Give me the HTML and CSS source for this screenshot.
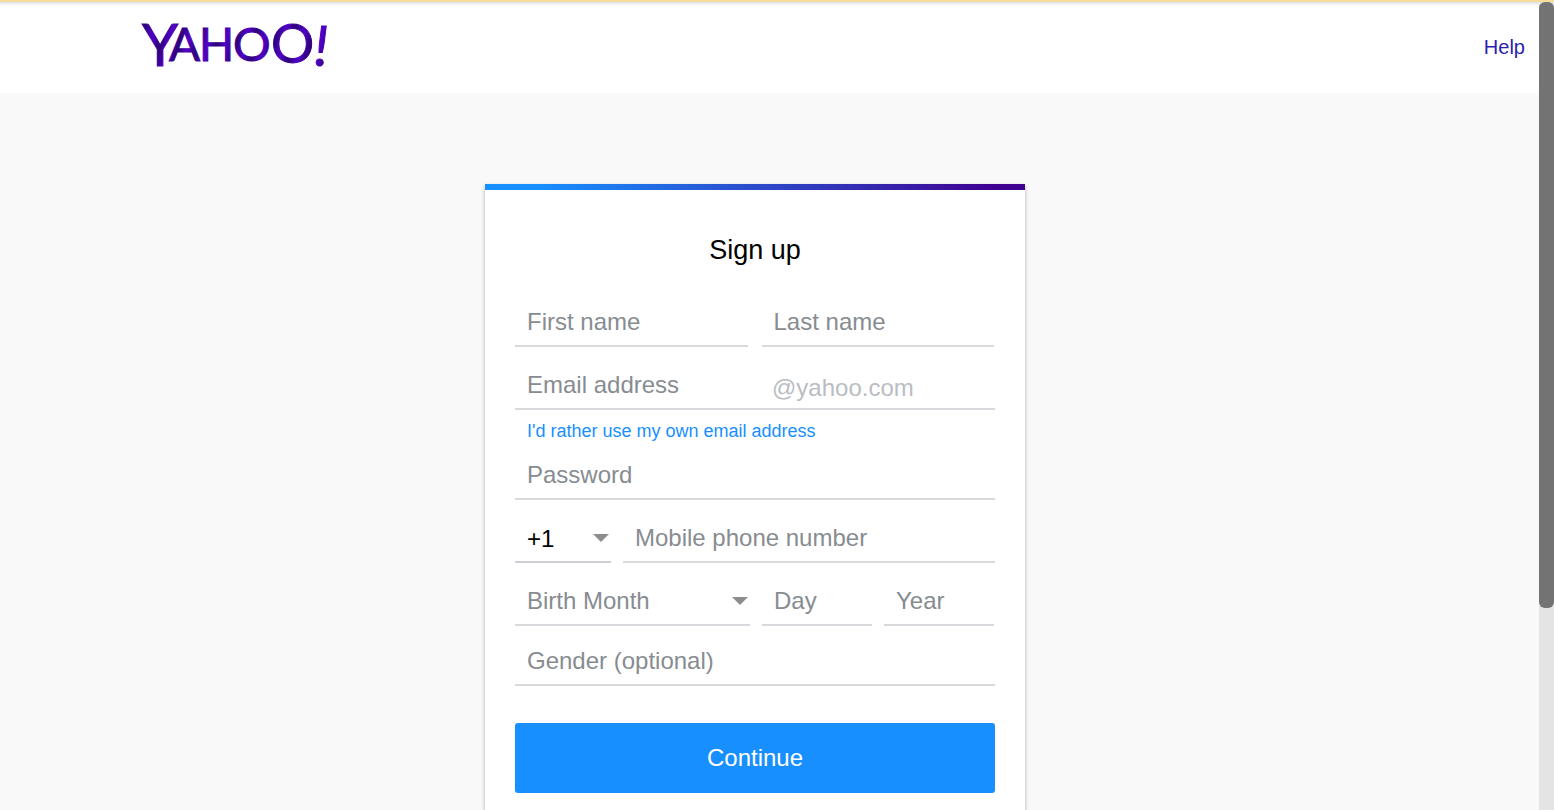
FILE: index.html
```html
<!DOCTYPE html>
<html lang="en">
<head>
<meta charset="utf-8">
<meta name="viewport" content="width=device-width, initial-scale=1">
<title>Sign up</title>
<link rel="stylesheet" href="styles.css">
</head>
<body>
<div class="viewport">
  <div class="page">
    <header class="header">
      <svg class="logo" width="210" height="80" viewBox="0 0 210 80" role="img" aria-label="Yahoo!">
        <defs>
          <linearGradient id="ink" x1="0" y1="0" x2="9" y2="2" gradientUnits="userSpaceOnUse" spreadMethod="reflect">
            <stop offset="0" stop-color="#5200c8"/>
            <stop offset="1" stop-color="#2c0078"/>
          </linearGradient>
        </defs>
        <g class="logo-letters" fill="url(#ink)" stroke="url(#ink)">
          <text x="2" y="61" font-size="58">Y</text>
          <text x="29" y="56" font-size="46">A</text>
          <text x="59" y="56" font-size="46">H</text>
          <text x="93" y="56" font-size="47">O</text>
          <text x="131" y="58" font-size="54">O</text>
          <text class="logo-bang" x="174" y="61" font-size="57">!</text>
        </g>
      </svg>
      <a class="help" href="#">Help</a>
    </header>
    <main class="main">
      <form class="card">
        <h1 class="title">Sign up</h1>
        <div class="row row-name">
          <input class="field" type="text" placeholder="First name" aria-label="First name">
          <input class="field" type="text" placeholder="Last name" aria-label="Last name">
        </div>
        <div class="row row-email">
          <input class="field" type="text" placeholder="Email address" aria-label="Email address">
          <span class="domain">@yahoo.com</span>
        </div>
        <a class="own-email" href="#">I'd rather use my own email address</a>
        <input class="field" type="password" placeholder="Password" aria-label="Password">
        <div class="row row-phone">
          <div class="picker">
            <select class="field country" aria-label="Country code"><option>+1</option></select>
            <svg class="arrow" width="16" height="8" viewBox="0 0 16 8" aria-hidden="true"><path d="M0 0h16L8 8z" fill="#8d8d8d"/></svg>
          </div>
          <input class="field" type="tel" placeholder="Mobile phone number" aria-label="Mobile phone number">
        </div>
        <div class="row row-birth">
          <div class="picker">
            <select class="field month" aria-label="Birth Month"><option>Birth Month</option></select>
            <svg class="arrow" width="16" height="8" viewBox="0 0 16 8" aria-hidden="true"><path d="M0 0h16L8 8z" fill="#8d8d8d"/></svg>
          </div>
          <input class="field" type="text" placeholder="Day" aria-label="Day">
          <input class="field" type="text" placeholder="Year" aria-label="Year">
        </div>
        <input class="field gender" type="text" placeholder="Gender (optional)" aria-label="Gender (optional)">
        <button class="continue" type="submit">Continue</button>
      </form>
    </main>
  </div>
  <div class="scrollbar" aria-hidden="true"><div class="thumb"></div></div>
</div>
</body>
</html>
```
FILE: styles.css
```css
* {
  box-sizing: border-box;
}

body {
  margin: 0;
  font-family: "Liberation Sans", Arial, sans-serif;
  background: #f9f9f9;
}

.viewport {
  display: flex;
  height: 100vh;
  overflow: hidden;
  border-top: 2px solid #f4dc9a;
}

.page {
  flex: 1;
  min-width: 0;
}

.header {
  display: flex;
  justify-content: space-between;
  align-items: flex-start;
  height: 91px;
  padding: 3px 14px 0 140px;
  background: linear-gradient(#dfe1e4, #ffffff 4px);
}

.logo {
  display: block;
}

.logo-letters {
  font-family: Lato, sans-serif;
  stroke-width: 1px;
}

.logo-bang {
  font-style: italic;
}

.help {
  margin-top: 30px;
  color: #2a1fae;
  font-size: 20px;
  line-height: 24px;
  text-decoration: none;
}

.main {
  display: flex;
  justify-content: center;
  padding: 91px 29px 0 0;
}

.card {
  display: flex;
  flex-direction: column;
  width: 100%;
  max-width: 540px;
  padding: 42px 30px 60px;
  background: linear-gradient(100deg, #188fff 10%, #400090 95%) top / 100% 6px no-repeat #ffffff;
  box-shadow: 0 2px 4px rgba(0, 0, 0, 0.3);
}

.title {
  margin: 0 0 23px;
  color: #000000;
  font-size: 27px;
  font-weight: 400;
  line-height: 48px;
  text-align: center;
}

.row {
  display: grid;
}

.row-name {
  grid-template-columns: 1fr 1fr;
  gap: 14px;
  padding-right: 1px;
}

.row-email {
  grid-template-columns: 245px 1fr;
  margin-top: 13px;
}

.row-phone {
  grid-template-columns: 96px 1fr;
  gap: 12px;
  margin-top: 13px;
}

.row-birth {
  grid-template-columns: 1fr 110px 110px;
  gap: 12px;
  margin-top: 13px;
  padding-right: 1px;
}

.field {
  width: 100%;
  min-width: 0;
  height: 50px;
  padding: 2px 12px 0;
  border: 0;
  border-bottom: 2px solid #d8d8dd;
  border-radius: 0;
  outline: 0;
  appearance: none;
  background: transparent;
  color: #878c91;
  font: 24px "Liberation Sans", Arial, sans-serif;
}

.field::placeholder {
  color: #878c91;
  opacity: 1;
}

.domain {
  height: 50px;
  padding-left: 12px;
  border-bottom: 2px solid #d8d8dd;
  color: #b9bdc2;
  font-size: 24px;
  line-height: 56px;
}

.own-email {
  margin: 9px 12px 7px;
  color: #188fff;
  font-size: 18px;
  line-height: 24px;
  text-decoration: none;
}

.picker {
  position: relative;
}

.country {
  border-color: #cccfd4;
  color: #000000;
}

.month {
  padding-top: 0;
}

.arrow {
  position: absolute;
  top: 21px;
  right: 2px;
  pointer-events: none;
}

.gender {
  margin-top: 10px;
}

.continue {
  height: 70px;
  margin-top: 37px;
  border: 0;
  border-radius: 3px;
  background: #188fff;
  color: #ffffff;
  font: 24px "Liberation Sans", Arial, sans-serif;
}

.scrollbar {
  width: 15px;
  background: #e4e4e4;
}

.thumb {
  height: 75%;
  border-radius: 6px;
  background: #737373;
}
```
